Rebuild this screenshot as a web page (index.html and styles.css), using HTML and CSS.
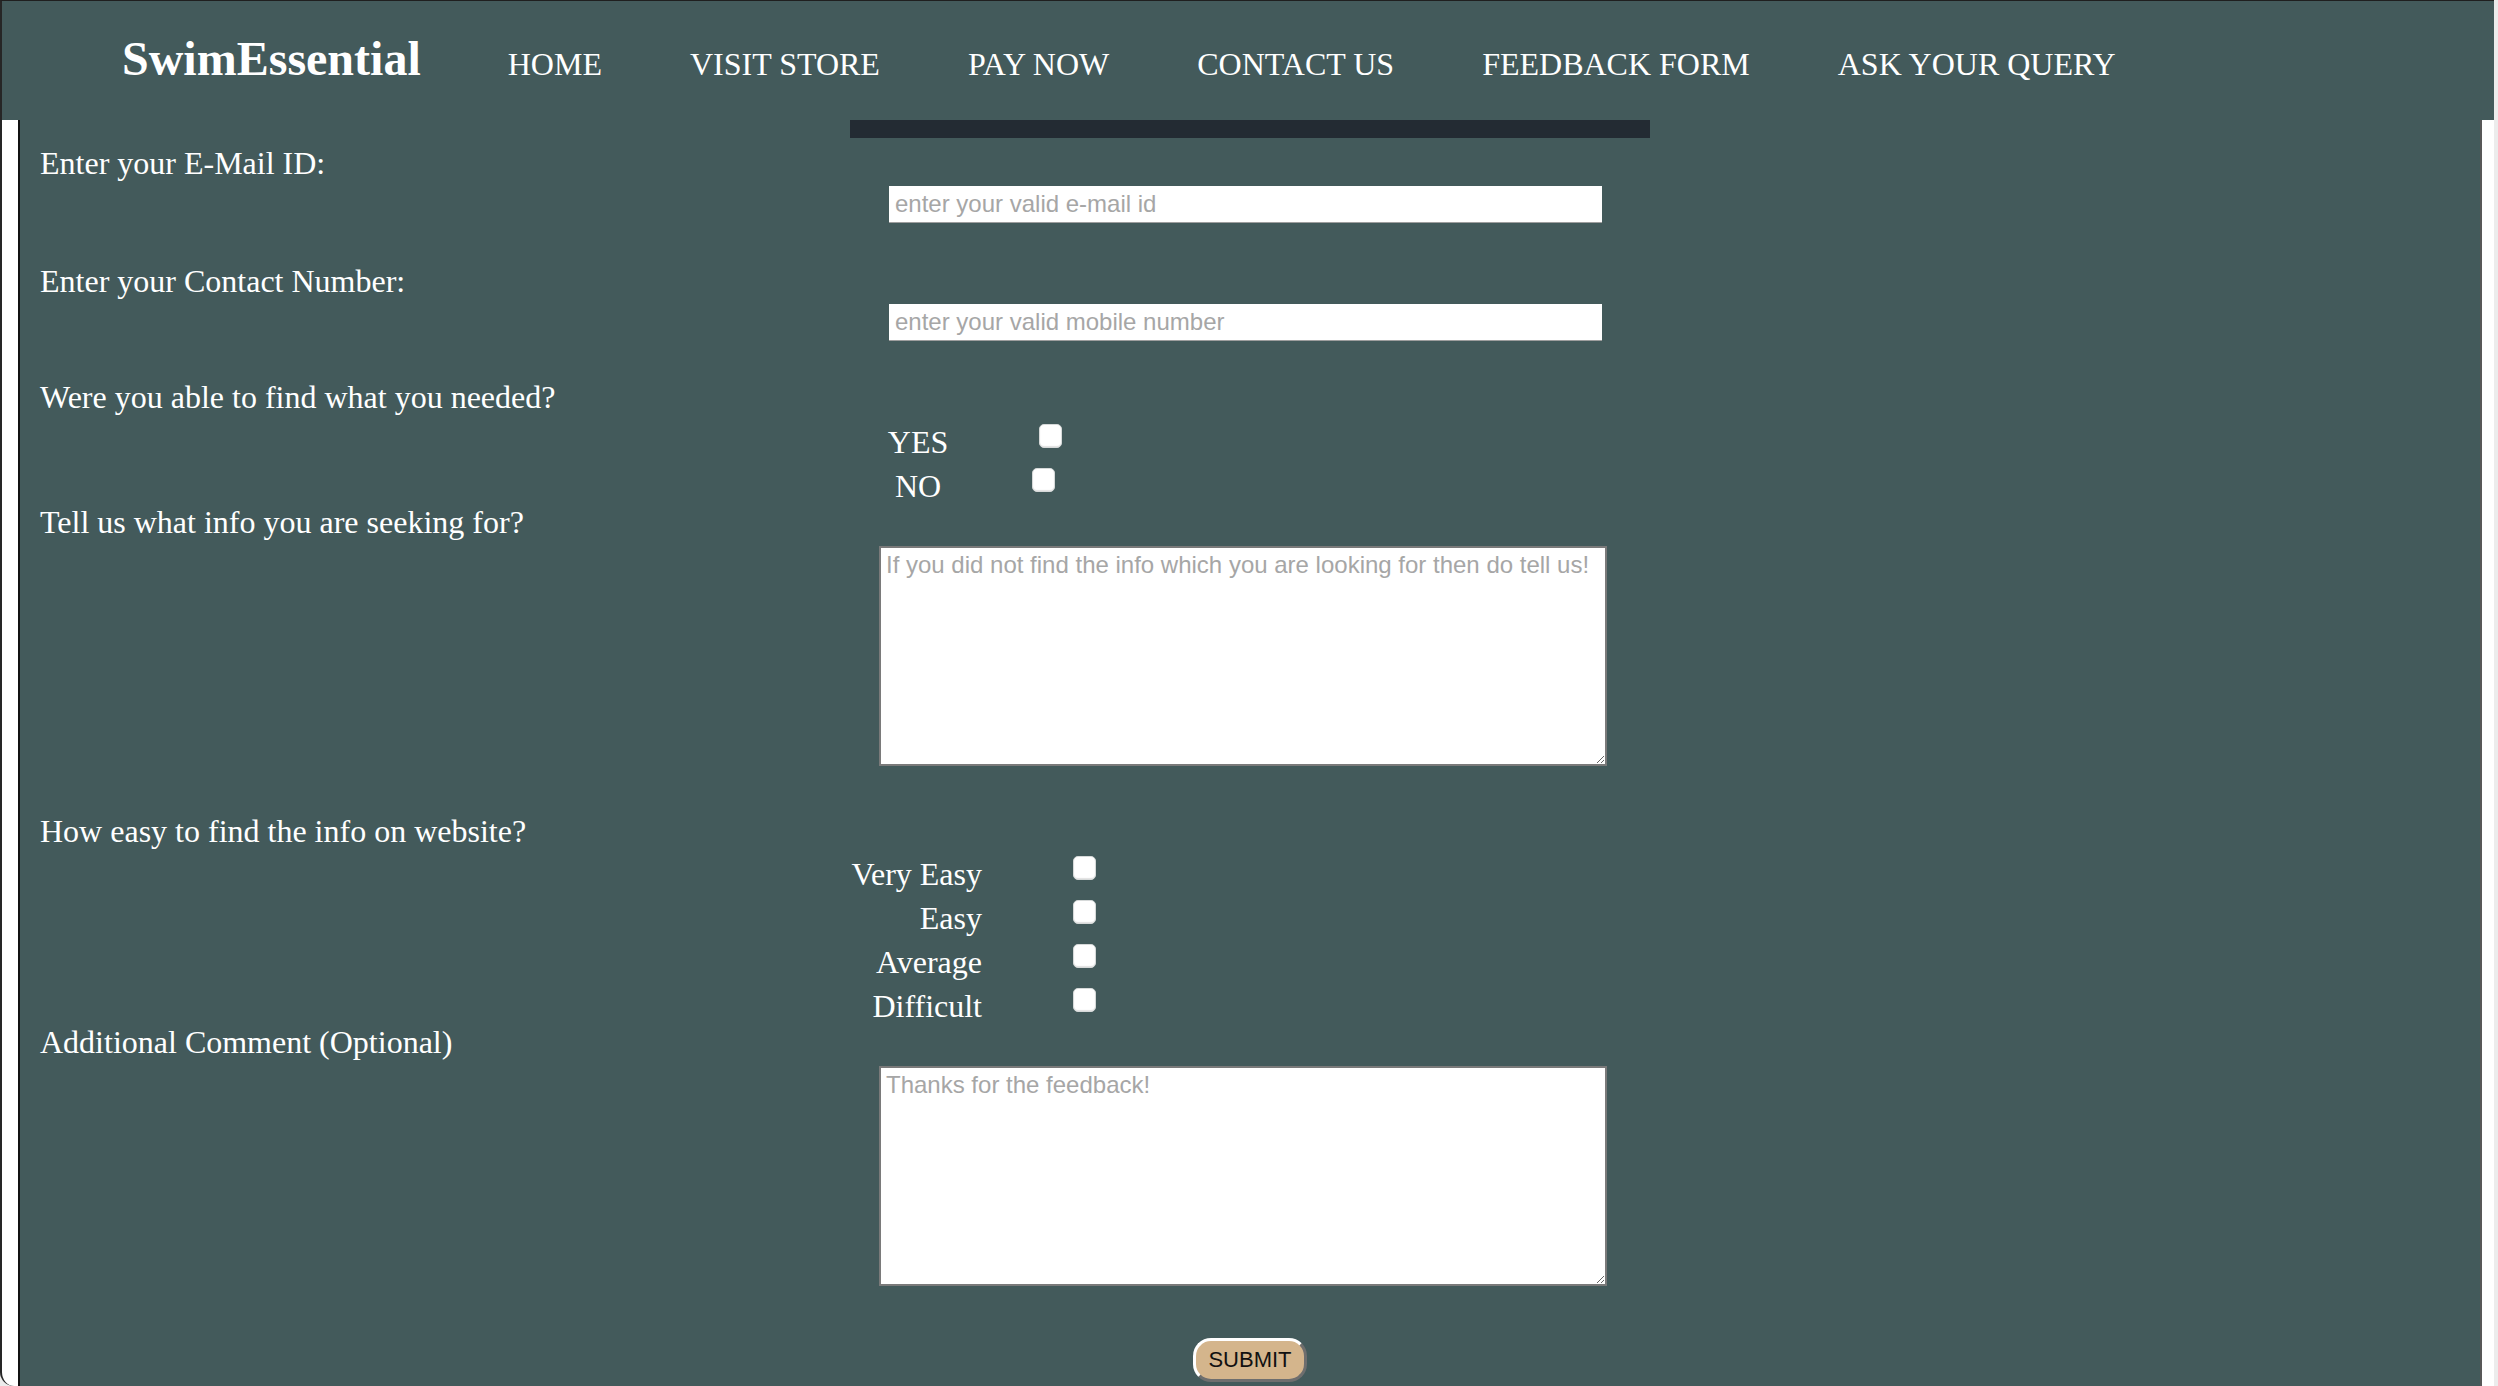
FILE: index.html
```html
<!DOCTYPE html>
<html lang="en">
<head>
<meta charset="utf-8">
<title>SwimEssential - Feedback Form</title>
<link rel="stylesheet" href="styles.css">
</head>
<body>
<div class="window">
  <header class="topbar">
    <div class="logo">SwimEssential</div>
    <nav class="nav">
      <a href="#">HOME</a>
      <a href="#">VISIT STORE</a>
      <a href="#">PAY NOW</a>
      <a href="#">CONTACT US</a>
      <a href="#">FEEDBACK FORM</a>
      <a href="#">ASK YOUR QUERY</a>
    </nav>
  </header>
  <main class="page">
    <div class="bar"></div>
    <form class="form" onsubmit="return false;">
      <div class="row row-email">
        <label class="q" for="email">Enter your E-Mail ID:</label>
        <div class="ctl ctl-input"><input id="email" class="field" type="email" placeholder="enter your valid e-mail id"></div>
      </div>
      <div class="row row-phone">
        <label class="q" for="phone">Enter your Contact Number:</label>
        <div class="ctl ctl-input"><input id="phone" class="field" type="tel" placeholder="enter your valid mobile number"></div>
      </div>
      <div class="row row-found">
        <div class="q">Were you able to find what you needed?</div>
        <div class="ctl ctl-choice">
          <div class="yesno">
            <label class="yn"><span>YES</span><input class="box" type="checkbox"></label>
            <label class="yn"><span>NO</span><input class="box" type="checkbox"></label>
          </div>
        </div>
      </div>
      <div class="row row-seek">
        <label class="q" for="seek">Tell us what info you are seeking for?</label>
        <div class="ctl ctl-text"><textarea id="seek" class="area" placeholder="If you did not find the info which you are looking for then do tell us!"></textarea></div>
      </div>
      <div class="row row-easy">
        <div class="q">How easy to find the info on website?</div>
        <div class="ctl ctl-scale">
          <div class="scale">
            <label class="lvl"><span>Very Easy</span><input class="box" type="checkbox"></label>
            <label class="lvl"><span>Easy</span><input class="box" type="checkbox"></label>
            <label class="lvl"><span>Average</span><input class="box" type="checkbox"></label>
            <label class="lvl"><span>Difficult</span><input class="box" type="checkbox"></label>
          </div>
        </div>
      </div>
      <div class="row row-comment">
        <label class="q" for="comment">Additional Comment (Optional)</label>
        <div class="ctl ctl-text"><textarea id="comment" class="area" placeholder="Thanks for the feedback!"></textarea></div>
      </div>
      <div class="actions">
        <button class="submit" type="submit">SUBMIT</button>
      </div>
    </form>
  </main>
</div>
</body>
</html>
```
FILE: styles.css
```css
* {
  box-sizing: border-box;
}

html,
body {
  margin: 0;
  padding: 0;
}

body {
  width: 2498px;
  height: 1386px;
  overflow: hidden;
  background: #ececec;
  font-family: "Liberation Serif", "Times New Roman", serif;
}

.window {
  width: 2494px;
  height: 1386px;
  background: #ffffff;
  border-top: 1px solid #1f1f1f;
  border-left: 2px solid #262626;
  border-bottom-left-radius: 14px;
  overflow: hidden;
  display: flex;
  flex-direction: column;
}

/* ---------- header ---------- */
.topbar {
  flex: none;
  height: 119px;
  background: #435a5b;
  display: flex;
  align-items: baseline;
  gap: 87px;
  padding: 30px 0 0 120px;
}

.logo {
  font-size: 48px;
  line-height: 55px;
  font-weight: bold;
  color: #ffffff;
  white-space: nowrap;
}

.nav {
  display: flex;
  align-items: baseline;
  gap: 88px;
}

.nav a {
  font-size: 32px;
  line-height: 37px;
  color: #ffffff;
  text-decoration: none;
  white-space: nowrap;
}

/* ---------- page ---------- */
.page {
  flex: 1;
  margin: 0 12px 0 16px;
  background: #435a5b;
  border-left: 2px solid #111111;
  border-right: 2px solid #585858;
}

.bar {
  margin-left: 830px;
  width: 800px;
  height: 18px;
  background: #232b33;
}

.form {
  margin: 7px 0 0 0;
}

.row {
  display: grid;
  grid-template-columns: 830px 800px;
  align-items: start;
}

.q {
  display: block;
  padding-left: 20px;
  font-size: 32px;
  line-height: 36px;
  color: #ffffff;
  white-space: nowrap;
}

.row-email {
  margin-bottom: 40px;
}

.row-phone {
  margin-bottom: 38px;
}

.row-seek {
  margin-bottom: 47px;
}

.ctl-input {
  padding-top: 41px;
}

.ctl-choice {
  padding-top: 45px;
}

.ctl-text {
  padding-top: 42px;
}

.ctl-scale {
  padding-top: 43px;
}

/* text inputs */
.field {
  display: block;
  margin: 0 0 0 39px;
  width: 713px;
  height: 37px;
  padding: 0 6px;
  border: none;
  border-bottom: 1px solid #9e9e9e;
  background: #ffffff;
  font-family: "Liberation Sans", Arial, sans-serif;
  font-size: 24px;
  color: #222222;
  outline: none;
}

.field::placeholder,
.area::placeholder {
  color: #a6a6a6;
}

/* textareas */
.area {
  display: block;
  margin: 0 0 0 29px;
  width: 728px;
  height: 220px;
  padding: 3px 5px;
  border: 2px solid #7a7a7a;
  background: #ffffff;
  font-family: "Liberation Sans", Arial, sans-serif;
  font-size: 24px;
  line-height: normal;
  color: #222222;
  outline: none;
}

/* checkboxes */
.box {
  appearance: none;
  -webkit-appearance: none;
  flex: none;
  margin: 0;
  width: 23px;
  height: 24px;
  background: #ffffff;
  border: 1px solid #d6d9d9;
  border-radius: 5px;
  box-shadow: inset 0 -1px 1px rgba(0, 0, 0, 0.12);
}

/* yes / no */
.yesno {
  width: 250px;
}

.yn {
  display: flex;
  justify-content: center;
  align-items: flex-start;
  gap: 91px;
  height: 44px;
  font-size: 32px;
  line-height: 36px;
  color: #ffffff;
}

.yn:last-child {
  height: 36px;
}

/* ease scale */
.lvl {
  display: flex;
  align-items: flex-start;
  height: 44px;
  font-size: 32px;
  line-height: 36px;
  color: #ffffff;
}

.lvl:last-child {
  height: 36px;
}

.lvl span {
  width: 132px;
  text-align: right;
  white-space: nowrap;
}

.lvl .box {
  margin-left: 91px;
}

/* submit */
.actions {
  margin: 52px 0 0 830px;
  width: 800px;
  display: flex;
  justify-content: center;
}

.submit {
  width: 114px;
  height: 44px;
  padding: 0;
  background: #d4b58c;
  border-style: solid;
  border-width: 3px;
  border-color: #ffffff #6e6e6e #6e6e6e #ffffff;
  border-radius: 18px;
  font-family: "Liberation Sans", Arial, sans-serif;
  font-size: 22px;
  color: #111111;
}
```
